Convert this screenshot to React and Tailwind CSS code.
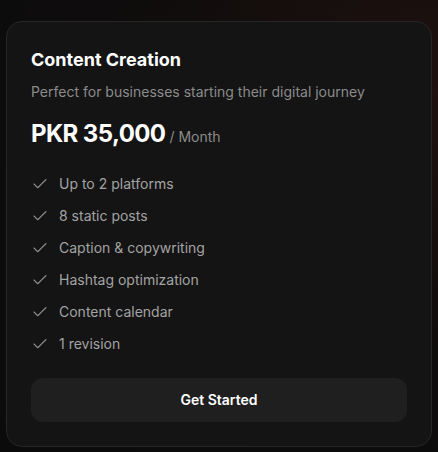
import React from 'react';
import { Check } from 'lucide-react';

const features = [
  'Up to 2 platforms',
  '8 static posts',
  'Caption & copywriting',
  'Hashtag optimization',
  'Content calendar',
  '1 revision',
];

function PlanCard() {
  return (
    <div className="w-[426px] rounded-2xl border border-[#262626] bg-[#141414] p-6">
      <h3 className="text-lg font-bold leading-7 text-white">Content Creation</h3>
      <p className="mt-2 text-sm leading-5 text-[#8b8b8b]">
        Perfect for businesses starting their digital journey
      </p>
      <div className="mt-4 flex items-baseline gap-1">
        <span className="text-2xl font-bold leading-8 tracking-tight text-white">PKR 35,000</span>
        <span className="text-sm text-[#8b8b8b]">/ Month</span>
      </div>
      <ul className="mt-6 space-y-3">
        {features.map((f) => (
          <li key={f} className="flex items-center gap-2.5 text-sm leading-5 text-[#a3a3a3]">
            <Check className="h-[18px] w-[18px] text-[#8b8b8b]" strokeWidth={1.5} />
            {f}
          </li>
        ))}
      </ul>
      <button className="mt-6 h-11 w-full rounded-xl bg-[#1f1f1f] text-sm font-semibold text-white">
        Get Started
      </button>
    </div>
  );
}

export default function App() {
  return (
    <div
      className="min-h-screen bg-[radial-gradient(ellipse_at_100%_20%,#1e110f_0%,#0e0c0c_55%,#0b0b0b_100%)] pl-1.5 pt-[21px]"
      style={{ fontFamily: 'Inter, "Noto Sans", sans-serif' }}
    >
      <PlanCard />
    </div>
  );
}
